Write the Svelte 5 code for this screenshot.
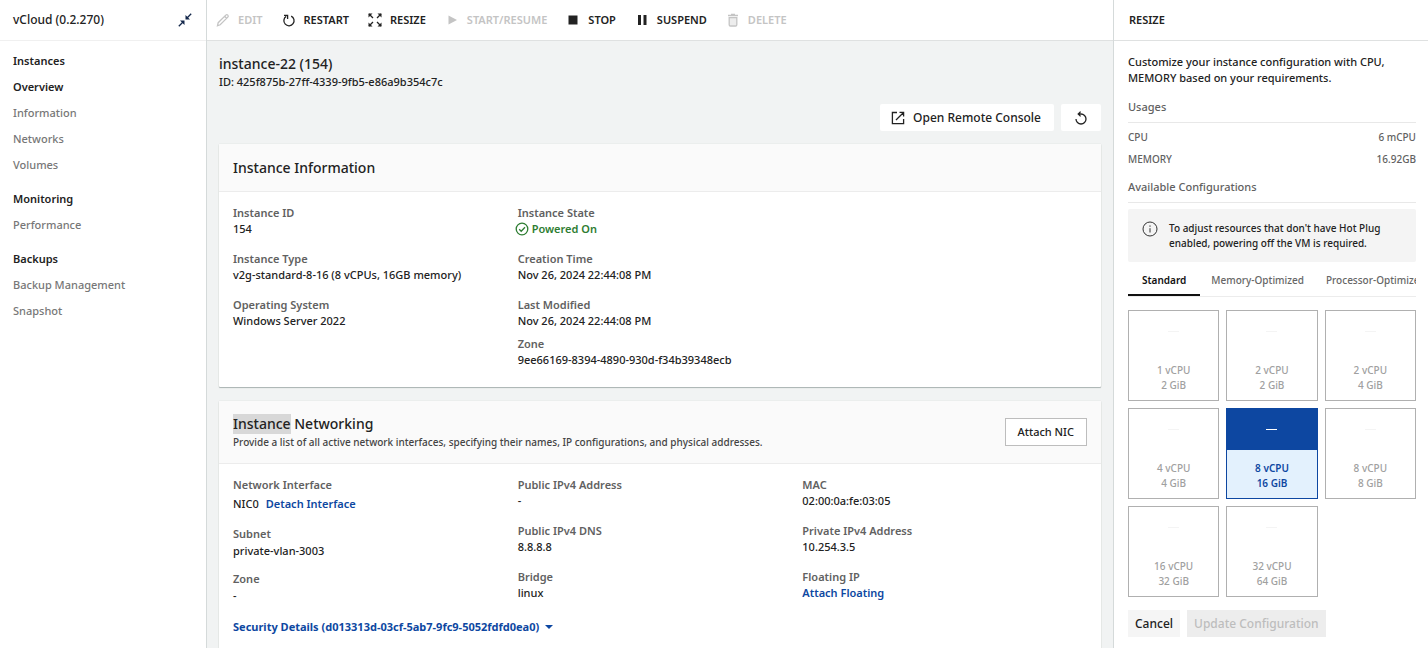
<script>
    let activeTab = $state('Standard');
    let selected = $state(4);

    const menu = [
        { title: 'Instances', items: ['Overview', 'Information', 'Networks', 'Volumes'] },
        { title: 'Monitoring', items: ['Performance'] },
        { title: 'Backups', items: ['Backup Management', 'Snapshot'] }
    ];

    const actions = [
        { label: 'EDIT', icon: 'edit', disabled: true },
        { label: 'RESTART', icon: 'restart' },
        { label: 'RESIZE', icon: 'resize' },
        { label: 'START/RESUME', icon: 'play', disabled: true },
        { label: 'STOP', icon: 'stop' },
        { label: 'SUSPEND', icon: 'pause' },
        { label: 'DELETE', icon: 'trash', disabled: true }
    ];

    const tabs = ['Standard', 'Memory-Optimized', 'Processor-Optimized'];

    const sizes = [
        { cpu: 1, memory: 2 },
        { cpu: 2, memory: 2 },
        { cpu: 2, memory: 4 },
        { cpu: 4, memory: 4 },
        { cpu: 8, memory: 16 },
        { cpu: 8, memory: 8 },
        { cpu: 16, memory: 32 },
        { cpu: 32, memory: 64 }
    ];
</script>

{#snippet icon(name)}
    <svg class="icon" viewBox="0 0 14 14" aria-hidden="true">
        {#if name === 'edit'}
            <path class="line" d="M1.5 12.7 2.2 9.7 9.8 2.1q1-1 2 0t0 2L4.2 11.8zM8.6 3.3l2 2" />
        {:else if name === 'restart'}
            <path class="line" d="M9.2 3.1a5.1 5.1 0 1 1-5 .3M2 2.4h3.6V6" />
        {:else if name === 'resize'}
            <path class="line" d="m1 1 4 4M13 1 9 5M1 13l4-4M13 13 9 9" />
            <path d="M.5.5h4l-4 4zM13.5.5v4l-4-4zM.5 13.5v-4l4 4zM13.5 13.5h-4l4-4z" />
        {:else if name === 'play'}
            <path d="M3.5 2.4v9.2L12 7z" />
        {:else if name === 'stop'}
            <path d="M2.5 2.5h9v9h-9z" />
        {:else if name === 'pause'}
            <path d="M3 2h3v10H3zM8.5 2h3v10h-3z" />
        {:else if name === 'trash'}
            <path class="tint" d="M3.4 4h7.2v8.5H3.4z" />
            <path class="line" d="M2 2.5h10M5 1.5h4M3.2 4.6v7.2q0 1.2 1.2 1.2h5.2q1.2 0 1.2-1.2V4.6z" />
        {/if}
    </svg>
{/snippet}

{#snippet field(label, value)}
    <div class="field">
        <dt>{label}</dt>
        <dd>{value}</dd>
    </div>
{/snippet}

<div class="shell">
    <aside class="sidebar">
        <header class="bar brand">
            <h1>vCloud (0.2.270)</h1>
            <button class="plain" aria-label="Collapse menu">
                <svg class="icon navy" viewBox="0 0 14 14" aria-hidden="true">
                    <path class="line" d="M.8 13.2 5 9M13.2.8 9 5" />
                    <path d="M2 7.5h4.5V12zM7.5 2v4.5H12z" />
                </svg>
            </button>
        </header>
        <nav>
            {#each menu as group}
                <section>
                    <h2>{group.title}</h2>
                    <ul>
                        {#each group.items as item}
                            <li><a href="#{item}" class:active={item === 'Overview'}>{item}</a></li>
                        {/each}
                    </ul>
                </section>
            {/each}
        </nav>
    </aside>

    <main>
        <div class="bar actions">
            {#each actions as action}
                <button class="plain action" disabled={action.disabled}>
                    {@render icon(action.icon)}
                    {action.label}
                </button>
            {/each}
        </div>

        <div class="content">
            <h2 class="title">instance-22 (154)</h2>
            <p class="id">ID: 425f875b-27ff-4339-9fb5-e86a9b354c7c</p>

            <div class="tools">
                <button class="tool">
                    <svg class="icon" viewBox="0 0 14 14" aria-hidden="true">
                        <path class="line" d="M6 1.5H1.4v11.2h11.2V8M8.5 1.4h4.1v4.1M12.3 1.7 5 9" />
                    </svg>
                    Open Remote Console
                </button>
                <button class="tool refresh" aria-label="Refresh">
                    <svg class="icon" viewBox="0 0 14 14" aria-hidden="true">
                        <path class="line" d="M2 8a5 5 0 1 0 5-5H4.2M6.6.6 4.2 3l2.4 2.4" />
                    </svg>
                </button>
            </div>

            <section class="card">
                <header>
                    <h3>Instance Information</h3>
                </header>
                <dl class="columns">
                    <div class="column">
                        {@render field('Instance ID', '154')}
                        {@render field('Instance Type', 'v2g-standard-8-16 (8 vCPUs, 16GB memory)')}
                        {@render field('Operating System', 'Windows Server 2022')}
                    </div>
                    <div class="column">
                        <div class="field">
                            <dt>Instance State</dt>
                            <dd class="state">
                                <svg class="icon" viewBox="0 0 14 14" aria-hidden="true">
                                    <circle class="line" cx="7" cy="7" r="5.8" />
                                    <path class="line" d="m4.2 7.2 2 2 3.8-4" />
                                </svg>
                                Powered On
                            </dd>
                        </div>
                        {@render field('Creation Time', 'Nov 26, 2024 22:44:08 PM')}
                        <div class="pair">
                            {@render field('Last Modified', 'Nov 26, 2024 22:44:08 PM')}
                            {@render field('Zone', '9ee66169-8394-4890-930d-f34b39348ecb')}
                        </div>
                    </div>
                </dl>
            </section>

            <section class="card">
                <header>
                    <div>
                        <h3><mark>Instance</mark> Networking</h3>
                        <p>Provide a list of all active network interfaces, specifying their names, IP configurations, and physical addresses.</p>
                    </div>
                    <button class="attach">Attach NIC</button>
                </header>
                <dl class="columns network">
                    <div class="column interface">
                        <div class="field">
                            <dt>Network Interface</dt>
                            <dd class="nic">NIC0 <a href="#detach">Detach Interface</a></dd>
                        </div>
                        {@render field('Subnet', 'private-vlan-3003')}
                        {@render field('Zone', '-')}
                    </div>
                    <div class="column">
                        {@render field('Public IPv4 Address', '-')}
                        {@render field('Public IPv4 DNS', '8.8.8.8')}
                        {@render field('Bridge', 'linux')}
                    </div>
                    <div class="column">
                        {@render field('MAC', '02:00:0a:fe:03:05')}
                        {@render field('Private IPv4 Address', '10.254.3.5')}
                        <div class="field">
                            <dt>Floating IP</dt>
                            <dd><a href="#floating">Attach Floating</a></dd>
                        </div>
                    </div>
                </dl>
                <button class="plain security">
                    Security Details (d013313d-03cf-5ab7-9fc9-5052fdfd0ea0)
                    <span class="caret"></span>
                </button>
            </section>
        </div>
    </main>

    <aside class="panel">
        <header class="bar">
            <h2>RESIZE</h2>
        </header>
        <div class="panel-body">
            <p class="intro">Customize your instance configuration with CPU, MEMORY based on your requirements.</p>
            <h3>Usages</h3>
            <dl class="usages">
                <div><dt>CPU</dt><dd>6 mCPU</dd></div>
                <div><dt>MEMORY</dt><dd>16.92GB</dd></div>
            </dl>
            <h3>Available Configurations</h3>
            <div class="notice">
                <svg viewBox="0 0 16 16" aria-hidden="true">
                    <circle cx="8" cy="8" r="7" />
                    <path d="M8 7.2v4.3M8 4.4v1.4" />
                </svg>
                <p>To adjust resources that don't have Hot Plug enabled, powering off the VM is required.</p>
            </div>
            <div class="tabs" role="tablist">
                {#each tabs as tab}
                    <button role="tab" aria-selected={activeTab === tab} class:current={activeTab === tab} onclick={() => (activeTab = tab)}>{tab}</button>
                {/each}
            </div>
            <div class="sizes">
                {#each sizes as size, i}
                    <button class="size" class:selected={selected === i} aria-pressed={selected === i} onclick={() => (selected = i)}>
                        <span class="top"><span class="dash"></span></span>
                        <span class="spec">{size.cpu} vCPU<br />{size.memory} GiB</span>
                    </button>
                {/each}
            </div>
            <div class="buttons">
                <button>Cancel</button>
                <button disabled>Update Configuration</button>
            </div>
        </div>
    </aside>
</div>

<style>
    :global(body) {
        margin: 0;
        background: #fff;
    }

    .shell {
        display: grid;
        grid-template-columns: 207px minmax(0, 1fr) 315px;
        height: 100vh;
        overflow: hidden;
        color: #222;
        font-family: "Noto Sans", sans-serif;
        font-size: 11px;
        font-weight: 500;
        line-height: 16px;
    }

    .shell * {
        box-sizing: border-box;
    }

    h1, h2, h3, p, ul, dl, dd {
        margin: 0;
        padding: 0;
    }

    h1, h2 {
        font-size: 11px;
        font-weight: 600;
    }

    ul {
        list-style: none;
    }

    a {
        color: #0d47a1;
        font-weight: 600;
        text-decoration: none;
    }

    button {
        display: flex;
        align-items: center;
        justify-content: center;
        padding: 0;
        border: 0;
        background: #fff;
        color: inherit;
        font: inherit;
        white-space: nowrap;
        cursor: pointer;
    }

    .plain {
        background: none;
    }

    .icon {
        flex: none;
        width: 14px;
        height: 14px;
        fill: currentColor;
    }

    .line {
        fill: none;
        stroke: currentColor;
        stroke-width: 1.3;
    }

    .tint {
        opacity: 0.3;
    }

    .navy {
        color: #14284b;
    }

    .bar {
        display: flex;
        flex: none;
        align-items: center;
        height: 41px;
        border-bottom: 1px solid #dfe1e1;
        background: #fff;
    }

    .sidebar {
        border-right: 1px solid #d5dada;
    }

    .brand {
        justify-content: space-between;
        padding: 0 14px 0 13px;
        border-color: #f0f0f0;
    }

    .brand h1 {
        font-size: 12px;
        font-weight: 500;
    }

    nav {
        display: flex;
        flex-direction: column;
        gap: 7px;
        padding: 6px 13px;
        line-height: 26px;
    }

    nav h2 {
        line-height: 27px;
    }

    nav a {
        display: block;
        color: #777;
        font-weight: 500;
    }

    nav .active {
        color: #222;
        font-weight: 600;
    }

    main {
        display: flex;
        flex-direction: column;
        min-height: 0;
        background: #f1f3f3;
    }

    .actions {
        gap: 19px;
        padding: 0 9px;
    }

    .action {
        gap: 8px;
        font-weight: 600;
    }

    .action:disabled {
        color: #c4c4c4;
    }

    .content {
        flex: 1;
        padding: 12px 12px 0;
        overflow: auto;
        scrollbar-width: none;
    }

    .title {
        font-size: 14px;
        font-weight: 500;
        line-height: 21px;
    }

    .tools {
        display: flex;
        justify-content: flex-end;
        gap: 7px;
        margin: 14px 0 13px;
    }

    .tool {
        gap: 8px;
        height: 27px;
        padding: 0 13px 0 11px;
        border-radius: 2px;
        font-size: 12px;
    }

    .refresh {
        padding: 0 13px;
    }

    .card {
        margin-bottom: 14px;
        border-radius: 1px;
        background: #fff;
        box-shadow: 0 1px 1px #a9b2b1, 0 0 1px #b5bcbb;
    }

    .card header {
        display: flex;
        align-items: center;
        justify-content: space-between;
        min-height: 48px;
        padding: 13px 14px;
        border-bottom: 1px solid #ececec;
        background: #fafafa;
    }

    .card h3 {
        font-size: 14px;
        font-weight: 500;
        line-height: 20px;
    }

    .card header p {
        color: #444;
        font-size: 10px;
    }

    mark {
        display: inline-block;
        background: #d8d8d8;
        color: inherit;
    }

    .columns {
        display: grid;
        grid-template-columns: repeat(3, 1fr);
        padding: 13px 14px 19px;
    }

    .network {
        padding-bottom: 14px;
    }

    .column {
        display: flex;
        flex-direction: column;
        gap: 14px;
    }

    .pair {
        display: flex;
        flex-direction: column;
        gap: 7px;
    }

    .interface {
        gap: 11px;
    }

    .interface dd {
        line-height: 18px;
    }

    .interface .nic {
        display: flex;
        gap: 7px;
        line-height: 22px;
    }

    .field dt {
        color: #616161;
        font-weight: 600;
    }

    .state {
        display: flex;
        align-items: center;
        gap: 3px;
        margin-left: -3px;
        color: #2e7d32;
        font-weight: 600;
    }

    .attach {
        height: 28px;
        padding: 0 12px;
        border: 1px solid #bdbdbd;
    }

    .security {
        gap: 6px;
        padding: 0 14px 20px;
        color: #0d47a1;
        font-weight: 700;
    }

    .caret {
        border: 4px solid transparent;
        border-top-color: currentColor;
        border-bottom: 0;
    }

    .panel {
        border-left: 1px solid #d5dada;
        background: #fff;
    }

    .panel .bar {
        padding: 0 15px;
    }

    .panel-body {
        padding: 13px 12px 11px 14px;
    }

    .intro {
        margin-bottom: 13px;
    }

    .panel h3 {
        padding-bottom: 7px;
        border-bottom: 1px solid #e8e8e8;
        color: #616161;
        font-size: 11px;
        font-weight: 500;
    }

    .usages {
        display: flex;
        flex-direction: column;
        gap: 6px;
        padding: 6px 0 12px;
        color: #616161;
        font-size: 10px;
    }

    .usages div {
        display: flex;
        justify-content: space-between;
    }

    .notice {
        display: flex;
        gap: 11px;
        margin-top: 6px;
        padding: 12px 14px 11px;
        border-radius: 2px;
        background: #f4f4f4;
        font-size: 10px;
        line-height: 15px;
    }

    .notice svg {
        flex: none;
        width: 16px;
        height: 16px;
        fill: none;
        stroke: #333;
    }

    .tabs {
        display: flex;
        overflow: hidden;
        border-bottom: 1px solid #ececec;
    }

    .tabs button {
        flex: none;
        height: 34px;
        padding: 4px 11px 0;
        border-bottom: 2px solid transparent;
        color: #666;
        font-size: 10px;
    }

    .tabs .current {
        padding: 4px 14px 0;
        border-color: #111;
        color: #111;
        font-weight: 600;
    }

    .sizes {
        display: grid;
        grid-template-columns: repeat(3, 1fr);
        gap: 7px;
        margin: 13px 0;
    }

    .size {
        flex-direction: column;
        height: 91px;
        border: 1px solid #b0b0b0;
        color: #a0a0a0;
        font-size: 10px;
        line-height: 15px;
    }

    .top {
        display: flex;
        align-items: center;
        justify-content: center;
        width: 100%;
        height: 41px;
    }

    .dash {
        width: 11px;
        height: 1px;
        background: #f4f4f4;
    }

    .spec {
        display: flex;
        flex: 1;
        align-items: center;
        justify-content: center;
        width: 100%;
        padding-top: 3px;
    }

    .selected {
        border-color: #0d47a1;
        color: #0d47a1;
        font-weight: 600;
    }

    .selected .top {
        background: #0d47a1;
    }

    .selected .dash {
        background: #fff;
    }

    .selected .spec {
        background: #e3f1fd;
    }

    .buttons {
        display: flex;
        gap: 7px;
    }

    .buttons button {
        height: 27px;
        padding: 0 7px;
        background: #f5f5f5;
        font-size: 12px;
    }

    .buttons button:disabled {
        background: #ededed;
        color: #bdbdbd;
    }
</style>
